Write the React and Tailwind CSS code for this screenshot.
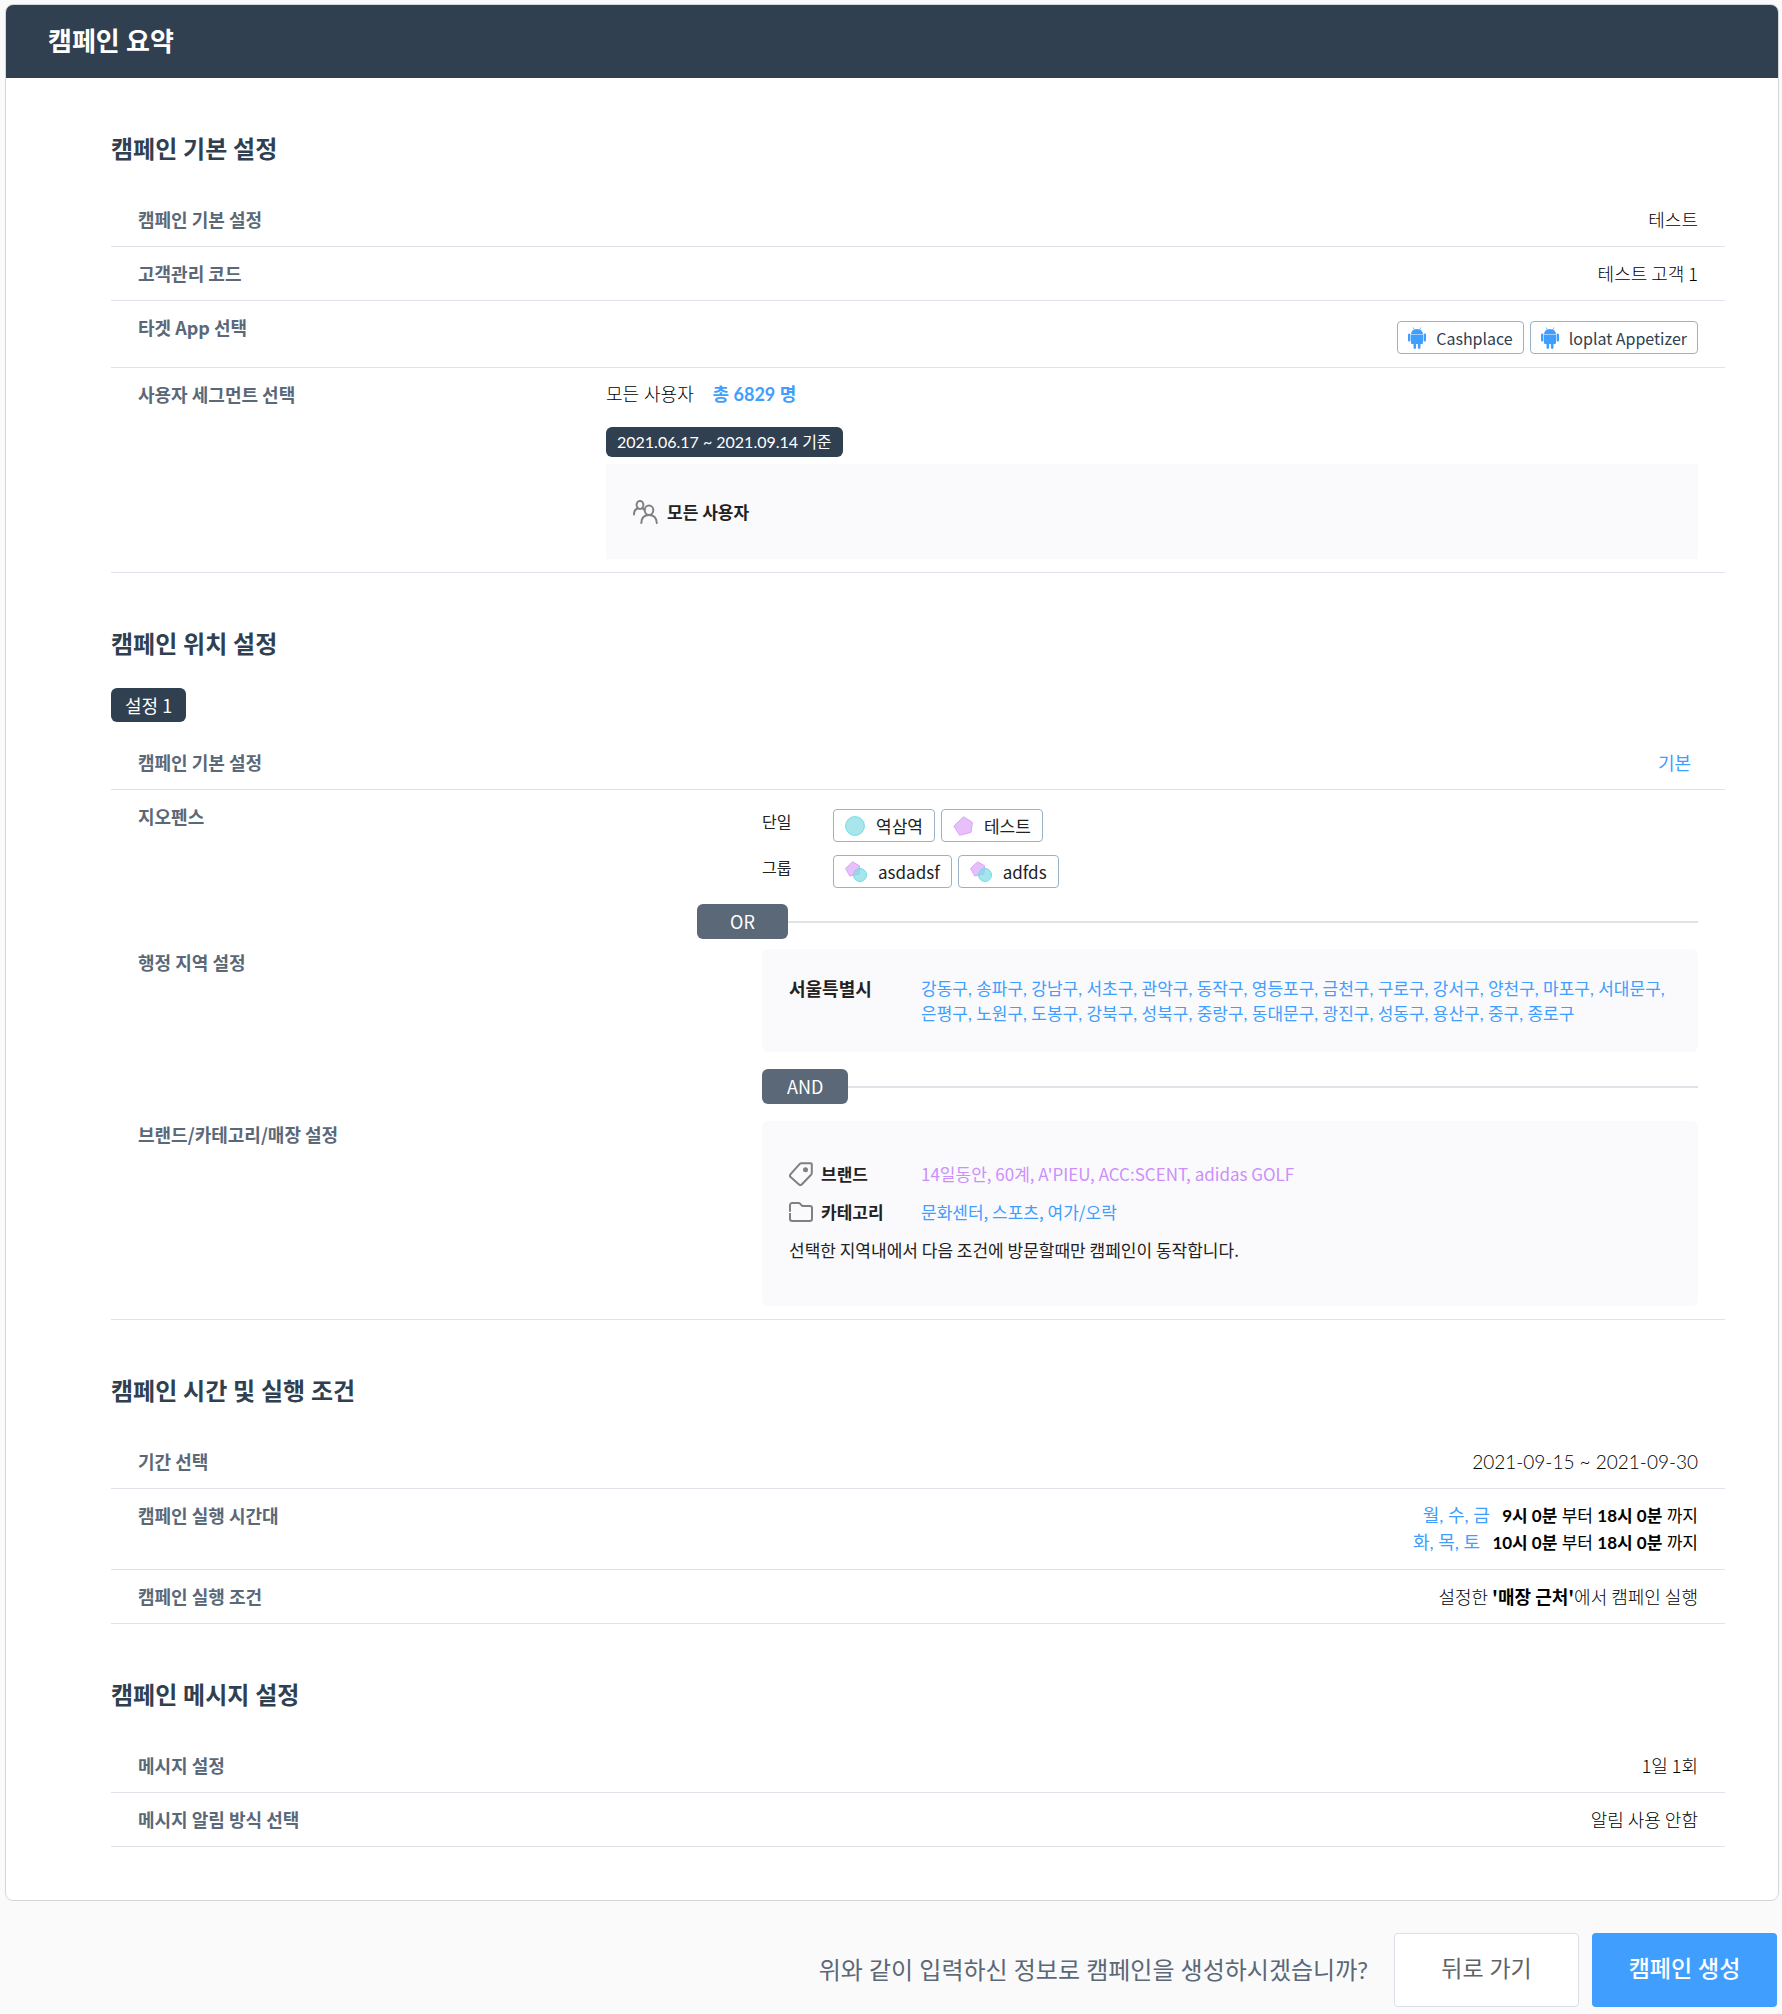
function Android() {
  return (
    <svg viewBox="0 0 18 22" className="h-[22px] w-[18px] shrink-0 fill-[#409eff]" aria-hidden="true">
      <path d="M3 7.6h12v8.2a1.2 1.2 0 0 1-1.2 1.2h-1.3v3.6a1.3 1.3 0 0 1-2.6 0V17H8.1v3.6a1.3 1.3 0 0 1-2.6 0V17H4.2A1.2 1.2 0 0 1 3 15.8z" />
      <path d="M3.1 6.9C3.2 5 4.4 3.4 6 2.6L4.7.5l.5-.3 1.4 2.2a6.5 6.5 0 0 1 4.8 0L12.8.2l.5.3L12 2.6c1.6.8 2.8 2.4 2.9 4.3z" />
      <rect x="0" y="6.5" width="2.4" height="8" rx="1.2" />
      <rect x="15.6" y="6.5" width="2.4" height="8" rx="1.2" />
    </svg>
  );
}

function Circle() {
  return (
    <svg viewBox="0 0 20 20" className="h-5 w-5 shrink-0" aria-hidden="true">
      <circle cx="10" cy="10" r="9.4" fill="#a8e6ec" stroke="#6fdbe3" />
    </svg>
  );
}

function Pentagon() {
  return (
    <svg viewBox="0 0 20 20" className="h-5 w-5 shrink-0" aria-hidden="true">
      <path d="M10.5.8 19.4 6.2 18 16.4 6.6 19.3.8 10z" fill="#e7bffb" stroke="#dba4fb" strokeLinejoin="round" />
    </svg>
  );
}

function Group() {
  return (
    <svg viewBox="0 0 22 21" className="h-[21px] w-[22px] shrink-0" aria-hidden="true">
      <path d="M7.5.8 14.6 4.8 14 13 4.7 15 .6 7.5z" fill="#e7bffb" stroke="#dba4fb" strokeLinejoin="round" />
      <circle cx="15" cy="14" r="6.5" fill="#7fdbe6" fillOpacity=".7" stroke="#6fdbe3" />
    </svg>
  );
}

function Users() {
  return (
    <svg viewBox="0 0 25 24" className="h-6 w-[25px] shrink-0 fill-none stroke-[#808080]" strokeWidth="2" strokeLinecap="round" aria-hidden="true">
      <ellipse cx="7" cy="5" rx="3.4" ry="3.9" />
      <ellipse cx="16" cy="10.3" rx="4.3" ry="4.7" />
      <path d="M1 14.5c0-3.6 1.6-5.7 4.2-6.3M9 8.3c1 .2 1.8.7 2.5 1.4M8.3 23c.2-5 3-8 7.7-8s7.5 3 7.8 8" />
    </svg>
  );
}

function Tag() {
  return (
    <svg viewBox="0 0 24 24" className="h-6 w-6 shrink-0 fill-none stroke-[#808080]" strokeWidth="2" strokeLinejoin="round" aria-hidden="true">
      <path d="M12.5 1.2h9.3a1 1 0 0 1 1 1v8.7a3 3 0 0 1-.7 1.8l-9.4 9.8a1.9 1.9 0 0 1-2.7 0L1.6 15a2 2 0 0 1 0-2.8l9.2-10.3a2.5 2.5 0 0 1 1.7-.7z" />
      <circle cx="16.5" cy="7.7" r="1.5" fill="#808080" />
    </svg>
  );
}

function Folder() {
  return (
    <svg viewBox="0 0 24 20" className="h-5 w-6 shrink-0 fill-none stroke-[#808080]" strokeWidth="2" strokeLinejoin="round" aria-hidden="true">
      <path d="M1 9.8V3.2A2.2 2.2 0 0 1 3.2 1h6.3a2 2 0 0 1 1.5.6l1.8 1.9a2 2 0 0 0 1.5.6h6.5A2.2 2.2 0 0 1 23 6.3v10.5a2.2 2.2 0 0 1-2.2 2.2H3.2A2.2 2.2 0 0 1 1 16.8v-5.9" />
    </svg>
  );
}

function Section({ title, children }) {
  return (
    <section className="mt-[53px]">
      <h2 className='font-[Lato,"Noto_Sans_CJK_KR",sans-serif] text-2xl leading-9 font-bold text-[#304050]'>{title}</h2>
      {children}
    </section>
  );
}

function Row({ label, className = "border-b border-[#e0e2ea] py-[13px]", children }) {
  return (
    <div className={className}>
      <div className="flex px-[27px]">
        <dt className="w-[468px] shrink-0 text-lg leading-[27px] font-bold text-[#5a6878]">{label}</dt>
        <dd className="min-w-0 flex-1 text-right text-lg leading-[27px] font-light text-black">{children}</dd>
      </div>
    </div>
  );
}

function AppChip({ children }) {
  return (
    <span className="inline-flex h-[33px] items-center gap-[10px] rounded border border-[#9db0c6] bg-white px-[10px] text-base">
      <Android />
      {children}
    </span>
  );
}

function FenceChip({ icon, children }) {
  return (
    <span className="inline-flex h-[33px] items-center gap-[11px] rounded border border-[#9db0c6] bg-white px-[11px] text-[17px]">
      {icon}
      {children}
    </span>
  );
}

function Operator({ label, className }) {
  return (
    <div className={className}>
      <span className="flex h-[35px] shrink-0 items-center justify-center rounded-md bg-[#5a6878] px-[25px] font-normal text-white">
        {label}
      </span>
      <span className="h-[2px] flex-1 bg-[#e0e3e8]" />
    </div>
  );
}

export default function App() {
  return (
    <div className='min-h-screen bg-[#fafafa] pt-1 pr-[3px] pb-[7px] pl-[5px] font-["Noto_Sans_CJK_KR",sans-serif] text-[#222]'>
      <main className="overflow-hidden rounded-lg border border-[#d4d6d9] bg-white pb-[53px]">
        <h1 className='bg-[#304050] px-[42px] py-[18px] font-[Lato,"Noto_Sans_CJK_KR",sans-serif] text-[26px] leading-[37px] font-bold text-white'>캠페인 요약</h1>
        <div className="pr-[53px] pl-[105px]">
          <Section title="캠페인 기본 설정">
            <dl className="mt-[26px]">
              <Row label="캠페인 기본 설정">테스트</Row>
              <Row label="고객관리 코드">테스트 고객 1</Row>
              <Row label="타겟 App 선택">
                <div className="mt-[7px] flex justify-end gap-[6px] font-normal text-[#304050]">
                  <AppChip>Cashplace</AppChip>
                  <AppChip>loplat Appetizer</AppChip>
                </div>
              </Row>
              <Row label="사용자 세그먼트 선택">
                <div className="text-left">
                  <p className='font-[Lato,"Noto_Sans_CJK_KR",sans-serif]'>
                    모든 사용자 <b className="ml-[14px] font-bold text-[#409eff]">총 6829 명</b>
                  </p>
                  <p className='mt-[19px] w-fit rounded-md bg-[#304050] px-[11px] font-[Lato,"Noto_Sans_CJK_KR",sans-serif] text-base leading-[30px] font-normal text-white'>
                    2021.06.17 ~ 2021.09.14 기준
                  </p>
                  <div className="mt-[7px] flex h-[95px] items-center gap-[9px] bg-[#fafafc] px-[27px] text-[17px] font-bold text-[#222]">
                    <Users />
                    모든 사용자
                  </div>
                </div>
              </Row>
            </dl>
          </Section>

          <Section title="캠페인 위치 설정">
            <p className="mt-[26px] w-fit rounded-md bg-[#304050] px-[14px] text-lg leading-[34px] text-white">설정 1</p>
            <dl className="mt-[14px]">
              <Row label="캠페인 기본 설정">
                <span className="pr-[7px] font-normal text-[#409eff]">기본</span>
              </Row>
              <Row label="지오펜스" className="pt-[13px]">
                <div className="ml-[156px] text-left font-normal text-[#222]">
                  <div className="mt-[6px] flex items-start">
                    <span className="w-[71px] shrink-0 text-base">단일</span>
                    <div className="flex flex-wrap gap-[6px]">
                      <FenceChip icon={<Circle />}>역삼역</FenceChip>
                      <FenceChip icon={<Pentagon />}>테스트</FenceChip>
                    </div>
                  </div>
                  <div className="mt-[13px] flex items-start">
                    <span className="w-[71px] shrink-0 text-base">그룹</span>
                    <div className="flex flex-wrap gap-[6px]">
                      <FenceChip icon={<Group />}>asdadsf</FenceChip>
                      <FenceChip icon={<Group />}>adfds</FenceChip>
                    </div>
                  </div>
                </div>
                <Operator label="OR" className="mt-4 ml-[91px] flex items-center *:first:w-[91px]" />
              </Row>
              <Row label="행정 지역 설정" className="pt-[10px]">
                <div className="ml-[156px] flex rounded-md bg-[#fafafc] pt-[27px] pr-5 pb-[26px] pl-[27px] text-left">
                  <strong className="w-[132px] shrink-0 leading-[25px] font-bold text-[#222]">서울특별시</strong>
                  <p className='font-[Lato,"Noto_Sans_CJK_KR",sans-serif] text-[17px] leading-[25px] font-normal break-keep text-[#409eff]'>
                    강동구, 송파구, 강남구, 서초구, 관악구, 동작구, 영등포구, 금천구, 구로구, 강서구, 양천구, 마포구, 서대문구, 은평구, 노원구, 도봉구, 강북구, 성북구, 중랑구, 동대문구, 광진구, 성동구, 용산구, 중구, 종로구
                  </p>
                </div>
                <Operator label="AND" className="mt-[17px] ml-[156px] flex items-center" />
              </Row>
              <Row label="브랜드/카테고리/매장 설정" className="border-b border-[#e0e2ea] pt-[17px] pb-[13px]">
                <div className="ml-[156px] rounded-md bg-[#fafafc] px-[27px] pt-[34px] pb-[37px] text-left text-[17px] leading-[38px] text-[#222]">
                  <div className="flex">
                    <strong className="flex w-[132px] shrink-0 items-center gap-2 font-bold"><Tag />브랜드</strong>
                    <span className="font-normal text-[#cc8ffb]">14일동안, 60계, A'PIEU, ACC:SCENT, adidas GOLF</span>
                  </div>
                  <div className="flex">
                    <strong className="flex w-[132px] shrink-0 items-center gap-2 font-bold"><Folder />카테고리</strong>
                    <span className="font-normal text-[#409eff]">문화센터, 스포츠, 여가/오락</span>
                  </div>
                  <p className="font-normal">선택한 지역내에서 다음 조건에 방문할때만 캠페인이 동작합니다.</p>
                </div>
              </Row>
            </dl>
          </Section>

          <Section title="캠페인 시간 및 실행 조건">
            <dl className="mt-[26px]">
              <Row label="기간 선택">
                <time className='block font-[Lato,"Noto_Sans_CJK_KR",sans-serif] text-[19px]'>2021-09-15 ~ 2021-09-30</time>
              </Row>
              <Row label="캠페인 실행 시간대">
                <ul className='font-[Lato,"Noto_Sans_CJK_KR",sans-serif] text-[17px] font-normal'>
                  <li><span className="mr-2 text-lg leading-none text-[#409eff]">월, 수, 금</span> <b>9시 0분</b> 부터 <b>18시 0분</b> 까지</li>
                  <li><span className="mr-2 text-lg leading-none text-[#409eff]">화, 목, 토</span> <b>10시 0분</b> 부터 <b>18시 0분</b> 까지</li>
                </ul>
              </Row>
              <Row label="캠페인 실행 조건">설정한 <b className="font-bold">'매장 근처'</b>에서 캠페인 실행</Row>
            </dl>
          </Section>

          <Section title="캠페인 메시지 설정">
            <dl className="mt-[26px]">
              <Row label="메시지 설정">1일 1회</Row>
              <Row label="메시지 알림 방식 선택">알림 사용 안함</Row>
            </dl>
          </Section>
        </div>
      </main>

      <footer className='mt-8 mr-[2px] flex items-center justify-end gap-[13px] font-[Lato,"Noto_Sans_CJK_KR",sans-serif]'>
        <p className="mr-[13px] text-2xl text-[#5a6878]">위와 같이 입력하신 정보로 캠페인을 생성하시겠습니까?</p>
        <button type="button" className="h-[74px] w-[185px] rounded border border-[#dcdfe6] bg-white pb-1 text-[23px] text-[#606266]">뒤로 가기</button>
        <button type="button" className="h-[74px] w-[185px] rounded bg-[#409eff] pb-1 text-[23px] font-medium text-white">캠페인 생성</button>
      </footer>
    </div>
  );
}
